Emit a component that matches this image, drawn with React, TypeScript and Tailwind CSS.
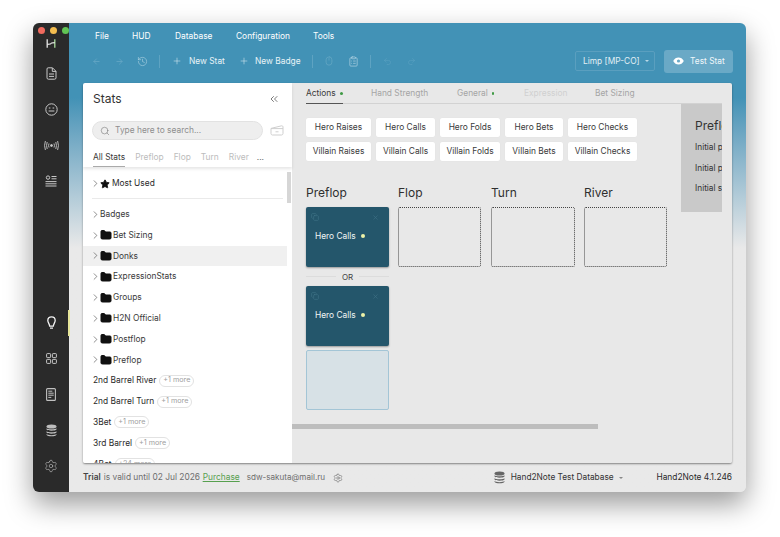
import React from "react";
import {
  ArrowLeft, ArrowRight, ChevronRight, ChevronsLeft, ClipboardList, Copy, Folder, History,
  Mouse, Plus, Redo2, Search, Settings, Star, Undo2, X,
} from "lucide-react";

function Dot({ className }: { className: string }) {
  return <span className={`inline-block w-[3px] h-[3px] rounded-full ${className}`} />;
}

function Side({ children, className = "" }: { children: React.ReactNode; className?: string }) {
  return <div className={`h-[36px] shrink-0 flex items-center justify-center w-full text-[#c8c8c8] ${className}`}>{children}</div>;
}

function DocIcon() {
  return (
    <svg width="11" height="13" viewBox="0 0 11 13" fill="none" stroke="currentColor" strokeWidth="1">
      <path d="M1 2a1.2 1.2 0 0 1 1.2-1.2h4.3L10 4.3v6.5a1.4 1.4 0 0 1-1.4 1.4H2.4A1.4 1.4 0 0 1 1 10.8z" />
      <path d="M6.3 1v3.4H10M3 7h5M3 9.4h5" />
    </svg>
  );
}
function Doc2Icon() {
  return (
    <svg width="10" height="13" viewBox="0 0 10 13" fill="none">
      <rect x=".6" y=".6" width="8.8" height="11.8" rx="1" fill="#2a2a2a" stroke="#c0c0c0" strokeWidth="1.1" />
      <path d="M2.3 3.2h4M2.3 5.2h5.4M2.3 7.2h5.4M2.3 9.4h3" stroke="#c0c0c0" strokeWidth="1" />
    </svg>
  );
}
function FaceIcon() {
  return (
    <svg width="13" height="13" viewBox="0 0 13 13" fill="none" stroke="currentColor" strokeWidth="1">
      <circle cx="6.5" cy="6.5" r="5.7" />
      <path d="M3.8 5h1.6M7.6 5h1.6M3.6 8h5.8" />
    </svg>
  );
}
function SignalIcon() {
  return (
    <svg width="15" height="11" viewBox="0 0 15 11" fill="none" stroke="currentColor" strokeWidth="0.9">
      <circle cx="7.5" cy="5.5" r="1" fill="currentColor" />
      <path d="M5 3.5q-.9 2 0 4M10 3.5q.9 2 0 4M3.2 2q-1.3 3.5 0 7M11.8 2q1.3 3.5 0 7M1.4 1q-1.7 4.5 0 9M13.6 1q1.7 4.5 0 9" />
    </svg>
  );
}
function ListIcon() {
  return (
    <svg width="12" height="12" viewBox="0 0 12 12" fill="none" stroke="currentColor" strokeWidth="1">
      <circle cx="3" cy="2.6" r="1.7" />
      <path d="M6.5 1.5h5M6.5 3.8h5M.5 6.6h11M.5 8.8h11M.5 11h11" />
    </svg>
  );
}
function LogoIcon() {
  return (
    <svg width="10" height="9" viewBox="0 0 10 9" fill="none" strokeWidth="1.3">
      <path d="M1.2.3v8.4" stroke="#e8e8e8" />
      <path d="M8.8.3v8.4" stroke="#a9dc9b" />
      <path d="M1.2 5.4Q5 5.2 5 4.5T8.8 3.6" stroke="#e8e8e8" />
    </svg>
  );
}
function BulbIcon() {
  return (
    <svg width="9" height="13" viewBox="0 0 9 13" fill="none" stroke="#f2f2f2" strokeWidth="1.3">
      <path d="M4.5.8C2.3.8.8 2.3.8 4.4c0 2 1.5 3.2 1.9 5.8h3.6c.4-2.6 1.9-3.8 1.9-5.8C8.2 2.3 6.7.8 4.5.8z" />
      <path d="M3 12.2h3" />
    </svg>
  );
}
function GridIcon() {
  return (
    <svg width="11" height="11" viewBox="0 0 11 11" fill="none" stroke="currentColor" strokeWidth="1">
      <rect x=".6" y=".6" width="4" height="4" rx=".7" />
      <rect x="6.4" y=".6" width="4" height="4" rx=".7" />
      <rect x=".6" y="6.4" width="4" height="4" rx=".7" />
      <rect x="6.4" y="6.4" width="4" height="4" rx=".7" />
    </svg>
  );
}
function DbIcon({ color }: { color: string }) {
  return (
    <svg width="11" height="13" viewBox="0 0 11 13" fill="none">
      <ellipse cx="5.5" cy="2.4" rx="5" ry="2" fill={color} />
      <path d="M.5 4.2c1 1.5 9 1.5 10 0v1.4c-1 1.6-9 1.6-10 0z" fill={color} />
      <path d="M.5 7.2c1 1.5 9 1.5 10 0v1.4c-1 1.6-9 1.6-10 0z" fill={color} />
      <path d="M.5 10c1 1.5 9 1.5 10 0v.8c-1 2-9 2-10 0z" fill={color} />
    </svg>
  );
}
function EyeIcon() {
  return (
    <svg width="11" height="8" viewBox="0 0 11 8">
      <path d="M.2 4C1.5 1.6 3.3.5 5.5.5S9.5 1.6 10.8 4C9.5 6.4 7.7 7.5 5.5 7.5S1.5 6.4.2 4z" fill="#fff" />
      <circle cx="5.5" cy="4" r="1.6" fill="#6aa9c6" />
    </svg>
  );
}
function TrayIcon() {
  return (
    <svg width="14" height="11" viewBox="0 0 14 11" fill="none" stroke="#cfcfcf" strokeWidth="1">
      <path d="M1 3.4 11.6.8c.8-.1 1.4.3 1.4 1V8.6c0 .8-.6 1.4-1.4 1.4H2.4C1.6 10 1 9.400 1 8.600z" />
      <path d="M1 3.600h12M5.500 6.800h3" />
    </svg>
  );
}

function Tag({ label, w }: { label: string; w: string }) {
  return (
    <div className={`h-[19px] ${w} bg-white rounded-[2px] flex items-center justify-center text-[8.4px] text-[#3a3a3a] shadow-[0_0_1px_rgba(0,0,0,0.08)]`}>
      {label}
    </div>
  );
}

function Chevron() {
  return <ChevronRight size={11} strokeWidth={1.1} className="text-[#222] shrink-0 -ml-[3px]" />;
}

function FolderRow({ label, active }: { label: string; active?: boolean }) {
  return (
    <div className={`h-[20.8px] pl-[10px] flex items-center ${active ? "bg-[#f0f0f0]" : ""}`}>
      <Chevron />
      <Folder size={12} fill="#111" stroke="#111" className="-ml-[1px] shrink-0" />
      <span className="ml-[1px] text-[#3a3a3a]">{label}</span>
    </div>
  );
}

function StatRow({ label, more = "+1 more" }: { label: string; more?: string }) {
  return (
    <div className="h-[20.8px] pl-[10px] flex items-center">
      <span>{label}</span>
      <span className="ml-[3px] h-[12px] px-[3px] rounded-full border border-[#e2e2e2] text-[7.2px] text-[#a0a0a0] flex items-center">{more}</span>
    </div>
  );
}

function HeroCard() {
  return (
    <div className="h-[60px] rounded-[2px] bg-[#24566b] shadow-[0_1px_2px_rgba(0,0,0,0.35)] px-[9px] pt-[6px] text-[#f0f5f5]">
      <div className="flex justify-between items-center text-[#3f7287]">
        <Copy size={8} className="-ml-[4px]" />
        <X size={7} className="mr-[1px]" />
      </div>
      <div className="mt-[9px] flex items-center text-[8.4px]">
        <span>Hero Calls</span>
        <span className="ml-[5px] w-[4px] h-[4px] rounded-full bg-[#eef2a8]" />
      </div>
    </div>
  );
}

function Empty({ title, className }: { title: string; className: string }) {
  return (
    <div className={className}>
      <div className="text-[12px] leading-[14px] text-[#2f2f2f] mb-[7px]">{title}</div>
      <div className="h-[60px] rounded-[2px] border border-dotted border-[#444]" />
    </div>
  );
}

export default function App() {
  return (
    <div className="w-[780px] h-[537px] bg-white pt-[23px] pl-[33px] overflow-hidden font-['Inter',sans-serif]">
      <div className="relative w-[713px] h-[469px] rounded-[6px] overflow-hidden flex shadow-[0_12px_28px_rgba(0,0,0,0.4)] bg-[#e9e9e9]">
        {/* traffic lights */}
        <div className="absolute left-[5px] top-[4px] flex gap-[5px] z-10">
          <span className="w-[7px] h-[7px] rounded-full bg-[#ef6a5e]" />
          <span className="w-[7px] h-[7px] rounded-full bg-[#f4bd4f]" />
          <span className="w-[7px] h-[7px] rounded-full bg-[#61c454]" />
        </div>
        {/* sidebar */}
        <aside className="relative w-[36px] shrink-0 bg-[#2a2a2a] flex flex-col pt-[16px] pb-[8px]">
          <div className="h-[9px] flex items-center justify-center mb-[7px]"><LogoIcon /></div>
          <Side><DocIcon /></Side>
          <Side><FaceIcon /></Side>
          <Side><SignalIcon /></Side>
          <Side><ListIcon /></Side>
          <Side className="mt-auto"><BulbIcon /></Side>
          <Side><GridIcon /></Side>
          <Side><Doc2Icon /></Side>
          <Side><DbIcon color="#bdbdbd" /></Side>
          <Side><Settings size={14} strokeWidth={1} /></Side>
          <span className="absolute -right-[1px] top-[287px] w-[2px] h-[26px] bg-[#e6e59a]" />
        </aside>

        {/* main */}
        <div className="flex-1 min-w-0 flex flex-col bg-gradient-to-b from-[#4292b6] from-[16%] to-[#e9e9e9] to-[48%]">
          {/* menu */}
          <div className="h-[27px] flex items-center pl-[26px] text-[8.4px] text-white shrink-0">
            <span className="w-[37px]">File</span>
            <span className="w-[43px]">HUD</span>
            <span className="w-[61px]">Database</span>
            <span className="w-[77px]">Configuration</span>
            <span>Tools</span>
          </div>
          {/* toolbar */}
          <div className="h-[33px] pb-[11px] flex items-center pl-[23px] pr-[13px] text-[8.4px] text-[#e8f3f7] shrink-0">
            <ArrowLeft size={9} className="text-[#68a8c6]" />
            <ArrowRight size={9} className="ml-[14px] text-[#68a8c6]" />
            <History size={11} className="ml-[13px] text-[#bcdbe8]" strokeWidth={1.2} />
            <span className="ml-[11px] w-px h-[13px] bg-[#5ea3c2]" />
            <Plus size={10} strokeWidth={1.2} className="ml-[12px]" />
            <span className="ml-[7px] w-[50px] whitespace-nowrap">New Stat</span>
            <Plus size={10} strokeWidth={1.2} />
            <span className="ml-[6px] w-[57px] whitespace-nowrap">New Badge</span>
            <span className="w-px h-[13px] bg-[#5ea3c2]" />
            <Mouse size={10} strokeWidth={1.1} className="ml-[11px] text-[#7db6cf]" />
            <ClipboardList size={11} strokeWidth={1.2} className="ml-[14px] text-[#cfe4ee]" />
            <span className="ml-[11px] w-px h-[13px] bg-[#5ea3c2]" />
            <Undo2 size={9} strokeWidth={1.1} className="ml-[12px] text-[#68a8c6]" />
            <Redo2 size={9} strokeWidth={1.1} className="ml-[15px] text-[#68a8c6]" />
            <div className="ml-auto h-[20px] w-[80px] border border-[#5a9fbf] rounded-[2px] flex items-center pl-[7px] text-[#e3f0f5]">
              Limp [MP-CO]
              <span className="ml-[5px] w-0 h-0 border-x-[2px] border-x-transparent border-t-[2px] border-t-[#b9d8e6]" />
            </div>
            <div className="ml-[9px] h-[23px] w-[69px] rounded-[3px] bg-[#6aa9c6] flex items-center pl-[9px] text-[#f0f7fa]">
              <EyeIcon />
              <span className="ml-[6px]">Test Stat</span>
            </div>
          </div>

          {/* panels */}
          <div className="h-[380px] flex ml-[14px] mr-[14px] shrink-0 rounded-[2px] overflow-hidden shadow-[0_1px_2px_rgba(0,0,0,0.45)]">
            {/* stats */}
            <div className="w-[209px] shrink-0 bg-white flex flex-col text-[8.4px] text-[#2a2a2a]">
              <div className="shadow-[0_2px_3px_rgba(0,0,0,0.1)] relative z-10 shrink-0">
                <div className="h-[31px] flex items-center justify-between pl-[10px] pr-[12px]">
                  <span className="text-[12px] text-[#333]">Stats</span>
                  <ChevronsLeft size={12} strokeWidth={1.2} className="text-[#222]" />
                </div>
                <div className="mt-[7px] h-[19px] flex items-center pl-[9px]">
                  <div className="w-[171px] h-[19px] rounded-full bg-[#eeeeee] border border-[#e2e2e2] flex items-center pl-[7px] text-[#8f8f8f]">
                    <Search size={10} strokeWidth={1.2} className="text-[#666]" />
                    <span className="ml-[5px]">Type here to search...</span>
                  </div>
                  <span className="ml-[7px]"><TrayIcon /></span>
                </div>
                <div className="mt-[7px] h-[20px] flex pl-[10px] gap-[10px] items-start pt-[4px] text-[#bcbcbc]">
                  <span className="h-[16px] text-[#3a3a3a] border-b border-[#aaa]">All Stats</span>
                  <span>Preflop</span>
                  <span>Flop</span>
                  <span>Turn</span>
                  <span>River</span>
                  <span className="text-[#666] -ml-[2px]">...</span>
                </div>
              </div>
              <div className="relative flex-1 min-h-0 overflow-hidden">
                <span className="absolute right-[1px] top-[5px] w-[4px] h-[31px] bg-[#d6d6d6]" />
                <div className="h-[31px] pl-[10px] flex items-center pt-[2px]">
                  <Chevron />
                  <Star size={10} fill="#111" stroke="#111" className="-ml-[1px]" />
                  <span className="ml-[2px]">Most Used</span>
                </div>
                <div className="mx-[9px] border-t border-[#eaeaea]" />
                <div className="mr-[5px] mt-[5px]">
                  <div className="h-[20.8px] pl-[10px] flex items-center">
                    <Chevron />
                    <span className="-ml-[1px] text-[#3a3a3a]">Badges</span>
                  </div>
                  {["Bet Sizing", "Donks", "ExpressionStats", "Groups", "H2N Official", "Postflop", "Preflop"].map((l) => (
                    <FolderRow key={l} label={l} active={l === "Donks"} />
                  ))}
                  <StatRow label="2nd Barrel River" />
                  <StatRow label="2nd Barrel Turn" />
                  <StatRow label="3Bet" />
                  <StatRow label="3rd Barrel" />
                  <StatRow label="4Bet" more="+24 more" />
                </div>
              </div>
            </div>

            {/* editor */}
            <div className="flex-1 min-w-0 bg-[#e8e8e8] flex flex-col pl-[14px] pr-[10px] relative">
              <div className="h-[21px] flex items-start pt-[4px] border-b border-[#d2d2d2] text-[8.4px] text-[#a5a5a5] shrink-0">
                <span className="h-[17px] w-[37px] text-[#3a3a3a] border-b border-[#555] flex items-start whitespace-nowrap">
                  Actions<Dot className="ml-[4px] mt-[5px] bg-[#3f9a45]" />
                </span>
                <span className="ml-[28px] w-[57px] whitespace-nowrap">Hand Strength</span>
                <span className="ml-[29px] w-[37px] flex items-start">General<Dot className="ml-[4px] mt-[5px] bg-[#3f9a45]" /></span>
                <span className="ml-[30px] w-[42px] text-[#d0d0d0]">Expression</span>
                <span className="ml-[29px]">Bet Sizing</span>
              </div>
              <div className="flex flex-1 min-h-0">
                <div className="flex-1 min-w-0">
                  <div className="mt-[14px] flex flex-col gap-[5px]">
                    <div className="flex gap-[5px]">
                      <Tag label="Hero Raises" w="w-[65px]" />
                      <Tag label="Hero Calls" w="w-[59px]" />
                      <Tag label="Hero Folds" w="w-[60px]" />
                      <Tag label="Hero Bets" w="w-[58px]" />
                      <Tag label="Hero Checks" w="w-[69px]" />
                    </div>
                    <div className="flex gap-[5px]">
                      <Tag label="Villain Raises" w="w-[65px]" />
                      <Tag label="Villain Calls" w="w-[59px]" />
                      <Tag label="Villain Folds" w="w-[60px]" />
                      <Tag label="Villain Bets" w="w-[58px]" />
                      <Tag label="Villain Checks" w="w-[69px]" />
                    </div>
                  </div>
                  <div className="mt-[25px] flex gap-[9px] items-start">
                    <div className="w-[83px]">
                      <div className="text-[12px] leading-[14px] text-[#2f2f2f] mb-[7px]">Preflop</div>
                      <HeroCard />
                      <div className="h-[19px] flex items-center gap-[6px] text-[8px] text-[#444]">
                        <span className="flex-1 border-t border-[#dcdcdc]" />OR<span className="flex-1 border-t border-[#dcdcdc]" />
                      </div>
                      <HeroCard />
                      <div className="mt-[4px] h-[60px] rounded-[2px] bg-[#d7e1e6] border border-[#a3c5d6]" />
                    </div>
                    <Empty title="Flop" className="w-[83px]" />
                    <Empty title="Turn" className="w-[84px] ml-[1px]" />
                    <Empty title="River" className="w-[83px]" />
                  </div>
                </div>
                <div className="w-[41px] h-[108px] shrink-0 bg-[#c9c9c9] overflow-hidden pl-[14px] text-[8.3px] text-[#333] whitespace-nowrap">
                  <div className="mt-[15px] text-[12px] leading-[14px]">Preflop</div>
                  <div className="mt-[8px] leading-[12px]">Initial player</div>
                  <div className="mt-[9px] leading-[12px]">Initial player</div>
                  <div className="mt-[8px] leading-[12px]">Initial stack</div>
                </div>
              </div>
              <span className="absolute left-0 top-[341px] w-[306px] h-[5px] bg-[#bdbdbd]" />
            </div>
          </div>

          {/* footer */}
          <div className="flex-1 flex items-center pl-[14px] pr-[14px] text-[8.4px] text-[#6e6e6e]">
            <span className="font-semibold text-[#444]">Trial</span>
            <span className="ml-[3px] w-[96px] whitespace-nowrap">is valid until 02 Jul 2026</span>
            <span className="ml-[3px] w-[36px] text-[#57a04f] underline">Purchase</span>
            <span className="ml-[8px] w-[79px] text-[8.1px] whitespace-nowrap">sdw-sakuta@mail.ru</span>
            <Settings size={10} strokeWidth={1.2} className="ml-[7px] text-[#555]" />
            <span className="ml-[151px]"><DbIcon color="#666" /></span>
            <span className="ml-[6px] text-[8.3px] text-[#333] whitespace-nowrap">Hand2Note Test Database</span>
            <span className="ml-[5px] w-0 h-0 border-x-[2px] border-x-transparent border-t-[2px] border-t-[#888]" />
            <span className="ml-auto text-[#2a2a2a]">Hand2Note 4.1.246</span>
          </div>
        </div>
      </div>
    </div>
  );
}
